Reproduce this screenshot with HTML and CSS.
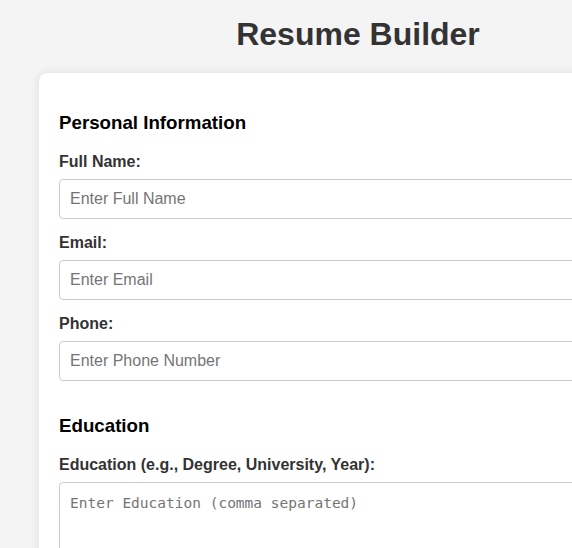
FILE: index.html
```html
<!DOCTYPE html>
<html lang="en">
<head>
<meta charset="utf-8">
<title>Resume Builder</title>
<link rel="stylesheet" href="styles.css">
</head>
<body>
<div class="page">
  <h1 class="title">Resume Builder</h1>
  <form class="card">
    <div class="section">
      <h3 class="section-title">Personal Information</h3>
      <label class="field-label" for="name">Full Name:</label>
      <input class="field-input" id="name" type="text" placeholder="Enter Full Name">
      <label class="field-label" for="email">Email:</label>
      <input class="field-input" id="email" type="email" placeholder="Enter Email">
      <label class="field-label" for="phone">Phone:</label>
      <input class="field-input" id="phone" type="tel" placeholder="Enter Phone Number">
    </div>
    <div class="section">
      <h3 class="section-title">Education</h3>
      <label class="field-label" for="education">Education (e.g., Degree, University, Year):</label>
      <textarea class="field-area" id="education" placeholder="Enter Education (comma separated)"></textarea>
    </div>
  </form>
</div>
</body>
</html>
```

FILE: styles.css
```css
html, body {
  overflow: hidden;
}

body {
  margin: 0;
  background: #f4f4f4;
  font-family: "Liberation Sans", Arial, sans-serif;
  color: #000;
}

.page {
  width: 700px;
  padding: 16px 0 0 8px;
}

.title {
  margin: 0 0 20px;
  font-size: 32px;
  line-height: 37px;
  font-weight: bold;
  text-align: center;
  color: #333;
}

.card {
  display: flex;
  flex-direction: column;
  width: 598px;
  margin-left: 31px;
  padding: 20px;
  background: #fff;
  border-radius: 8px;
  box-shadow: 0 0 10px rgba(0, 0, 0, 0.1);
}

.section {
  display: flex;
  flex-direction: column;
}

.section-title {
  margin: 18.5px 0 19.5px;
  font-size: 18.72px;
  font-weight: bold;
  color: #000;
}

.field-label {
  margin-bottom: 8px;
  font-size: 16px;
  font-weight: bold;
  color: #333;
}

.field-input {
  box-sizing: border-box;
  width: 100%;
  height: 40px;
  margin: 0 0 15px;
  padding: 0 10px;
  border: 1px solid #ccc;
  border-radius: 4px;
  font-family: "Liberation Sans", Arial, sans-serif;
  font-size: 16px;
  color: #333;
  background: #fff;
}

.field-area {
  box-sizing: border-box;
  width: 100%;
  height: 100px;
  margin: 0;
  padding: 10px;
  border: 1px solid #ccc;
  border-radius: 4px;
  font-family: "DejaVu Sans Mono", monospace;
  font-size: 14.5px;
  line-height: 20px;
  color: #333;
  background: #fff;
  resize: vertical;
}

.field-input::placeholder,
.field-area::placeholder {
  color: #757575;
}
```
